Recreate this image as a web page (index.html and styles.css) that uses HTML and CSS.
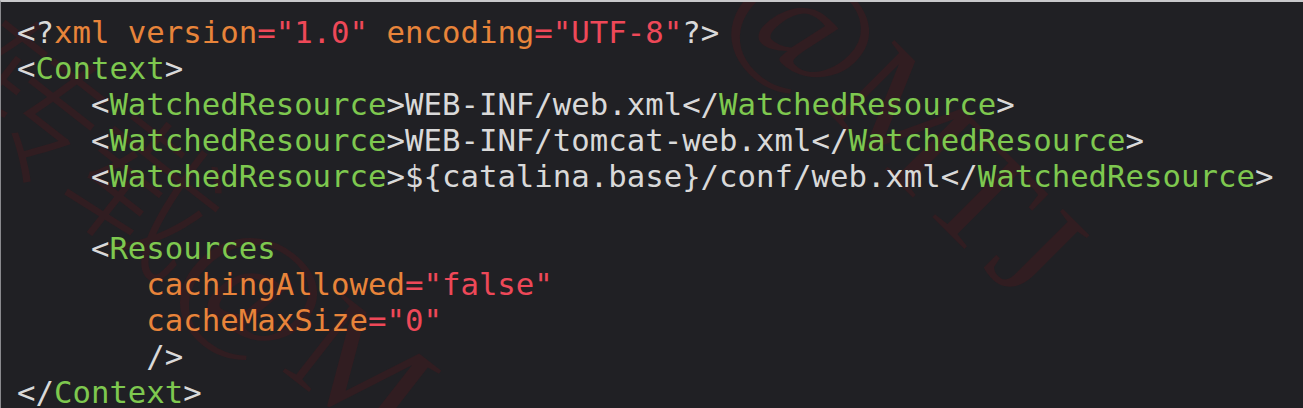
FILE: index.html
```html
<!DOCTYPE html>
<html>
<head>
<meta charset="utf-8">
<link rel="stylesheet" href="styles.css">
</head>
<body>
<div class="frame">
<div class="wm" aria-hidden="true">
  <span class="wm-t wm1">转载@M</span>
  <span class="wm-t wm2">@MTJ</span>
</div>
<pre class="code"><span class="p">&lt;?</span><span class="a">xml version</span><span class="s">="1.0"</span> <span class="a">encoding</span><span class="s">="UTF-8"</span><span class="p">?&gt;</span>
<span class="p">&lt;</span><span class="t">Context</span><span class="p">&gt;</span>
    <span class="p">&lt;</span><span class="t">WatchedResource</span><span class="p">&gt;WEB-INF/web.xml&lt;/</span><span class="t">WatchedResource</span><span class="p">&gt;</span>
    <span class="p">&lt;</span><span class="t">WatchedResource</span><span class="p">&gt;WEB-INF/tomcat-web.xml&lt;/</span><span class="t">WatchedResource</span><span class="p">&gt;</span>
    <span class="p">&lt;</span><span class="t">WatchedResource</span><span class="p">&gt;${catalina.base}/conf/web.xml&lt;/</span><span class="t">WatchedResource</span><span class="p">&gt;</span>

    <span class="p">&lt;</span><span class="t">Resources</span>
       <span class="a">cachingAllowed</span><span class="s">="false"</span>
       <span class="a">cacheMaxSize</span><span class="s">="0"</span>
       <span class="p">/&gt;</span>
<span class="p">&lt;/</span><span class="t">Context</span><span class="p">&gt;</span></pre>
</div>
</body>
</html>
```
FILE: styles.css
```css
html, body {
  margin: 0;
  padding: 0;
  background: #202024;
  overflow: hidden;
}
.frame {
  position: relative;
  width: 1303px;
  height: 408px;
  box-sizing: border-box;
  background: #202024;
  border-top: 2px solid #c9c9cb;
  border-left: 1px solid #8a8a8e;
  overflow: hidden;
}
.code {
  position: relative;
  margin: 0;
  padding: 13px 0 0 16px;
  font-family: "DejaVu Sans Mono", "Liberation Mono", monospace;
  font-size: 30.7px;
  line-height: 36px;
  color: #d9d9d9;
  white-space: pre;
}
.p { color: #d9d9d9; }
.t { color: #7ec84f; }
.a { color: #e8843a; }
.s { color: #ee4858; }
.wm {
  position: absolute;
  inset: 0;
  pointer-events: none;
}
.wm-t {
  position: absolute;
  font-family: "Liberation Serif", "Noto Sans CJK SC", serif;
  font-size: 150px;
  font-weight: 300;
  color: rgba(110, 20, 24, 0.22);
  white-space: nowrap;
  transform-origin: 0 0;
}
.wm1 {
  left: 40px;
  top: -40px;
  transform: rotate(38deg);
}
.wm2 {
  left: 820px;
  top: -90px;
  transform: rotate(45deg);
}
```
